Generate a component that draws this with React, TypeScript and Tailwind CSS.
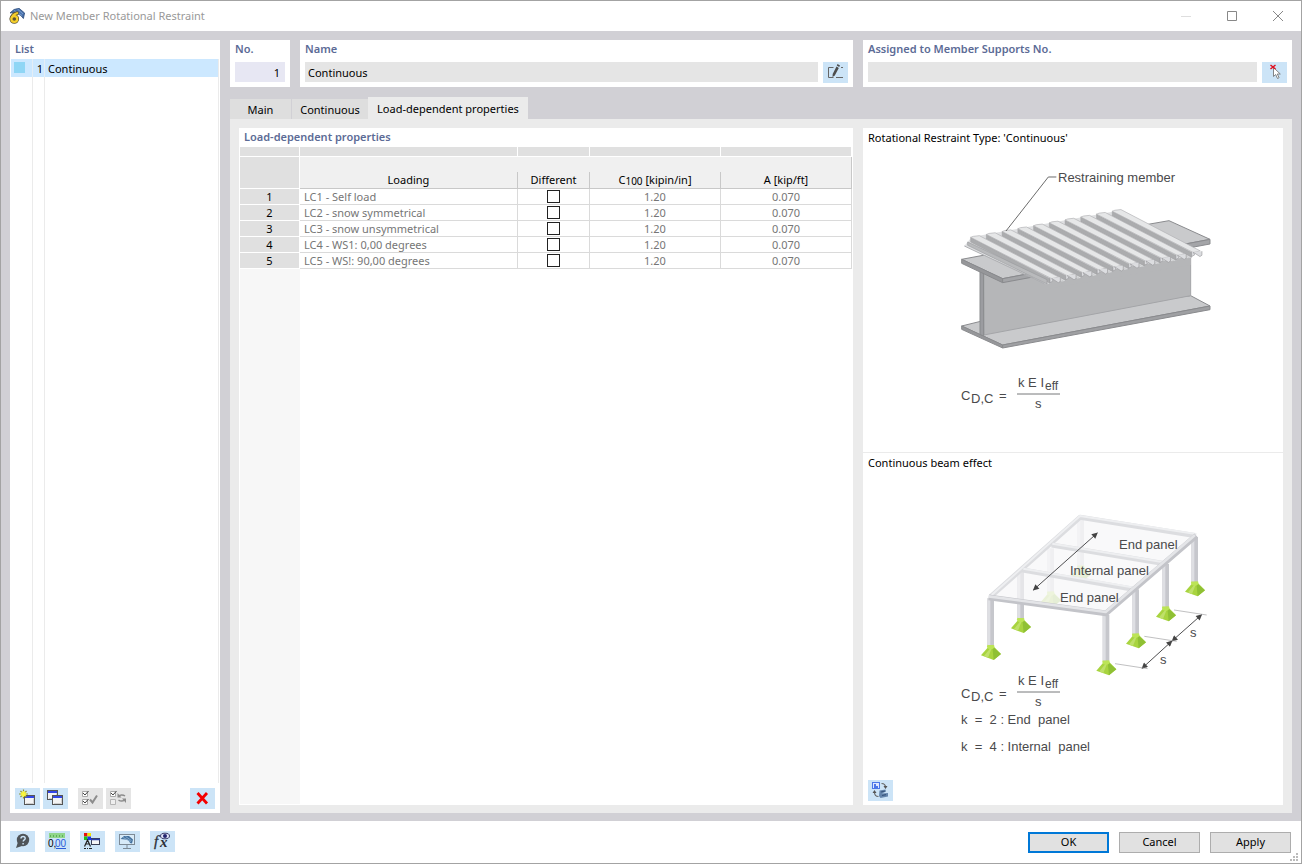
import type { ReactNode } from "react";

const rows = [
  { id: 1, loading: "LC1 - Self load", c100: "1.20", a: "0.070" },
  { id: 2, loading: "LC2 - snow symmetrical", c100: "1.20", a: "0.070" },
  { id: 3, loading: "LC3 - snow unsymmetrical", c100: "1.20", a: "0.070" },
  { id: 4, loading: "LC4 - WS1: 0,00 degrees", c100: "1.20", a: "0.070" },
  { id: 5, loading: "LC5 - WS!: 90,00 degrees", c100: "1.20", a: "0.070" },
];

function ToolButton({ label, disabled, children }: { label: string; disabled?: boolean; children: ReactNode }) {
  return (
    <button
      type="button"
      aria-label={label}
      disabled={disabled}
      className="flex h-[21px] w-[25px] shrink-0 items-center justify-center bg-[#cce4f7] disabled:bg-[#e5e5e5]"
    >
      <svg width="25" height="21" viewBox="0 0 25 21" aria-hidden="true">
        {children}
      </svg>
    </button>
  );
}

function WindowGlyph({ x, y }: { x: number; y: number }) {
  return (
    <g>
      <rect x={x + 0.5} y={y + 0.5} width="10" height="9" fill="#f4f4f4" stroke="#555" />
      <rect x={x + 1} y={y + 1} width="9" height="2" fill="#3346e6" />
      <path d={`M${x + 2} ${y + 8.5}h7.500v-5`} fill="none" stroke="#cfcfcf" />
    </g>
  );
}

function AppIcon() {
  return (
    <svg width="16" height="16" viewBox="0 0 16 16" aria-hidden="true">
      <path d="M1 5 5 1.500 10 .3 15.600 5l-1.200 5.500-2.600-3L6 4.200z" fill="#4a72ad" stroke="#2b4a78" strokeWidth=".8" />
      <path d="m5 2.500 8 5M8.500 1l5.500 5" stroke="#86a9d6" strokeWidth=".8" />
      <path
        d="M8 5.200C5.500 5.800 3 8 2.600 11"
        fill="none"
        stroke="#5d5535"
        strokeWidth="3.800"
        strokeLinecap="round"
      />
      <circle cx="5.300" cy="11" r="2.900" fill="none" stroke="#5d5535" strokeWidth="3.800" />
      <path d="M8 5.200C5.500 5.800 3 8 2.600 11" fill="none" stroke="#f5cf2b" strokeWidth="2.200" strokeLinecap="round" />
      <circle cx="5.300" cy="11" r="2.900" fill="#5d5535" stroke="#f5cf2b" strokeWidth="2.200" />
    </svg>
  );
}

const RUN = { x: 238, y: 124 };

function pts(list: number[][]) {
  return list.map((p) => p.join(",")).join(" ");
}

function Rib({ index }: { index: number }) {
  const x = 92 + 47.2 * index;
  const y = 247 - 8.7 * index;
  const ex = x + RUN.x;
  const ey = y + RUN.y;
  return (
    <g strokeLinejoin="round">
      <polygon points={pts([[x - 12, y + 17], [x + 2, y + 14], [ex + 2, ey + 14], [ex - 12, ey + 17]])} fill="#dcdddf" />
      <path d={`M${x - 6} ${y + 16}l${RUN.x} ${RUN.y}`} stroke="#c3c4c6" strokeWidth="2" />
      <polygon points={pts([[x, y], [x, y + 14], [ex, ey + 14], [ex, ey]])} fill="#abacae" stroke="#9fa0a2" strokeWidth="1.500" />
      <polygon
        points={pts([[x, y], [x + 8, y - 3], [x + 26, y - 5], [ex + 26, ey - 5], [ex + 5, ey]])}
        fill="#e6e7e8"
        stroke="#b0b1b3"
        strokeWidth="2"
      />
      <path d={`M${ex} ${ey - 2}v14l9 -5 -4 -8 20 13 6 -4v-12`} fill="#dcdde0" stroke="#9b9c9f" strokeWidth="2" />
    </g>
  );
}

function BeamDrawing() {
  const order = [9, 8, 7, 6, 5, 4, 3, 2, 1, 0];
  return (
    <svg
      viewBox="863 155 420 297"
      className="h-[297px] w-[420px]"
      fontFamily="'Liberation Sans', Arial, sans-serif"
      role="img"
      aria-label="Rotational restraint drawing"
    >
      <g transform="translate(940 155) scale(.333333)">
        <g stroke="#8a8b8e" strokeWidth="3" strokeLinejoin="round">
          <polygon points="65,513 130,497 752,422 810,453 188,570" fill="#c9cacc" />
          <polygon points="65,513 188,570 188,579 65,523" fill="#96979a" />
          <polygon points="188,570 810,453 810,464 188,579" fill="#9fa0a3" />
          <polygon points="130,350 752,270 752,422 132,540" fill="#b5b6b8" stroke="#a4a5a8" />
          <polygon points="120,345 131,350 131,543 120,538" fill="#9b9ca0" />
          <polygon points="65,313 630,207 687,197 810,253 188,371" fill="#c9cacc" />
          <polygon points="65,313 188,371 188,383 65,325" fill="#96979a" />
          <polygon points="188,371 810,253 810,267 188,383" fill="#a4a5a8" />
          <polygon points="330,362 752,284 752,330 330,400" fill="#b5b6b8" stroke="none" />
        </g>
        <polygon points="73,273 95,246 518,170 545,167 782,292 744,305 325,376 318,384" fill="#dfe0e2" />
        {order.map((i) => (
          <Rib key={i} index={i} />
        ))}
        <polygon points="83,261 83,271 321,387 321,374" fill="#b9babc" stroke="#9c9da0" strokeWidth="2" />
        <path d="M73 273l240 113" stroke="#aeafb2" strokeWidth="3" />
        <path d="M198 228 325 66h24" fill="none" stroke="#4d4d4d" strokeWidth="2.500" />
      </g>
      <g fill="#4a4a4c" fontSize="13">
        <text x="1058" y="182">Restraining member</text>
        <Formula y={0} />
      </g>
    </svg>
  );
}

function Formula({ y }: { y: number }) {
  return (
    <g transform={`translate(0 ${y})`}>
      <text x="961" y="400">C</text>
      <text x="971" y="403">D,C</text>
      <text x="999" y="400">=</text>
      <text x="1018" y="387">k E I</text>
      <text x="1045" y="390" fontSize="12">eff</text>
      <path d="M1017 394h43" stroke="#77787a" />
      <text x="1035" y="408">s</text>
    </g>
  );
}

function Post({ x, top, bottom, faded }: { x: number; top: number; bottom: number; faded?: boolean }) {
  return (
    <g opacity={faded ? 0.5 : 1}>
      <polygon
        points={pts([[x - 4, bottom - 2], [x + 7, bottom - 2], [x + 31, bottom + 23], [x + 9, bottom + 41], [x - 29, bottom + 27]])}
        fill="#a8d43f"
      />
      <polygon points={pts([[x + 5, bottom], [x + 31, bottom + 23], [x + 9, bottom + 41]])} fill="#8fc034" />
      <polygon points={pts([[x - 1, bottom + 6], [x + 3, bottom + 6], [x - 8, bottom + 34], [x - 20, bottom + 29]])} fill="#bfe06a" />
      <ellipse cx={x} cy={bottom} rx="11" ry="9" fill="#bce456" />
      <rect x={x - 10} y={top} width="20" height={bottom - top - 4} fill="#c6c7cc" />
      <rect x={x - 10} y={top} width="9" height={bottom - top - 4} fill="#dedfe3" />
    </g>
  );
}

function FrameDrawing() {
  return (
    <svg
      viewBox="863 480 420 300"
      className="h-[300px] w-[420px]"
      fontFamily="'Liberation Sans', Arial, sans-serif"
      role="img"
      aria-label="Continuous beam effect drawing"
    >
      <defs>
        <marker id="tip" viewBox="0 0 10 10" refX="9" refY="5" markerWidth="22" markerHeight="18" markerUnits="userSpaceOnUse" orient="auto-start-reverse">
          <path d="M0 0 10 5 0 10z" fill="#444" />
        </marker>
      </defs>
      <g transform="translate(970 500) scale(.333333)">
        <Post x={332} top={60} bottom={200} faded />
        <Post x={242} top={145} bottom={278} faded />
        <Post x={152} top={215} bottom={358} />
        <Post x={62} top={295} bottom={439} />
        <polygon points="62,290 330,52 678,107 410,340" fill="#f6f6f7" opacity=".65" />
        <g fill="none" strokeLinejoin="round">
          <path d="M62 290 330 52 678 107M245 135l345 57M158 210l345 60" stroke="#dcdde0" strokeWidth="15" />
          <path d="M64 286 330 48l348 54M247 131l343 57M160 206l343 59" stroke="#eeeff1" strokeWidth="6" />
        </g>
        <Post x={674} top={112} bottom={248} />
        <Post x={587} top={192} bottom={323} />
        <Post x={497} top={268} bottom={404} />
        <Post x={408} top={345} bottom={485} />
        <path d="M56 292 408 340 679 107" fill="none" stroke="#c3c4c9" strokeWidth="17" strokeLinejoin="round" />
        <path d="M56 289 407 336 675 105" fill="none" stroke="#e4e5e8" strokeWidth="8" strokeLinejoin="round" />
        <g stroke="#4d4d4f" strokeWidth="3" fill="none">
          <path d="M190 270 382 99" markerStart="url(#tip)" markerEnd="url(#tip)" />
          <path d="M516 505 606 423" markerStart="url(#tip)" markerEnd="url(#tip)" />
          <path d="M606 423 695 344" markerStart="url(#tip)" markerEnd="url(#tip)" />
          <path d="M435 491 533 506M523 409l97 15M612 330l98 15" stroke="#a0a0a2" strokeWidth="2" />
        </g>
      </g>
      <g fill="#4a4a4c" fontSize="13">
        <text x="1119" y="549">End panel</text>
        <text x="1070" y="575">Internal panel</text>
        <text x="1060" y="602">End panel</text>
        <text x="1190" y="637">s</text>
        <text x="1160" y="664">s</text>
        <Formula y={298} />
        <text x="961" y="724" xmlSpace="preserve">k  =  2 : End  panel</text>
        <text x="961" y="751" xmlSpace="preserve">k  =  4 : Internal  panel</text>
      </g>
    </svg>
  );
}

const stripCell = "h-[10px] border-r border-b border-white bg-[#e0e0e0] p-0";
const headCell = "h-8 border-b border-[#c8c8c8] bg-[#f0f0f0] p-0 align-bottom font-normal";
const bodyCell = "h-4 border-r border-b border-[#dadada] p-0 text-center leading-[15px] text-[#767676]";

function LoadTable() {
  return (
    <table className="w-full table-fixed border-separate border-spacing-0">
      <colgroup>
        <col className="w-[60px]" />
        <col />
        <col className="w-[72px]" />
        <col className="w-[131px]" />
        <col className="w-[131px]" />
      </colgroup>
      <thead>
        <tr>
          <td className={stripCell} />
          <td className={stripCell} />
          <td className={stripCell} />
          <td className={stripCell} />
          <td className={stripCell} />
        </tr>
        <tr>
          <td className="h-8 border-r border-b border-white bg-[#e0e0e0] p-0" />
          <th className={headCell}>
            <div className="h-4 border-r border-[#c8c8c8] leading-4">Loading</div>
          </th>
          <th className={headCell}>
            <div className="h-4 border-r border-[#c8c8c8] leading-4">Different</div>
          </th>
          <th className={headCell}>
            <div className="h-4 border-r border-[#c8c8c8] leading-4">
              C<span className="align-[-1px] text-[10px] leading-none">100</span> [kipin/in]
            </div>
          </th>
          <th className={`${headCell} border-r`}>
            <div className="h-4 leading-4">A [kip/ft]</div>
          </th>
        </tr>
      </thead>
      <tbody>
        {rows.map((r) => (
          <tr key={r.id}>
            <th scope="row" className="h-4 border-r border-b border-white bg-[#e0e0e0] p-0 leading-[15px] font-normal">
              {r.id}
            </th>
            <td className="h-4 border-r border-b border-[#dadada] px-1 py-0 leading-[15px] text-[#767676]">{r.loading}</td>
            <td className={bodyCell}>
              <input
                type="checkbox"
                aria-label={`Different for ${r.loading}`}
                className="mx-auto block size-[13px] appearance-none border border-[#222] bg-white checked:bg-[#222]"
              />
            </td>
            <td className={bodyCell}>{r.c100}</td>
            <td className={bodyCell}>{r.a}</td>
          </tr>
        ))}
      </tbody>
    </table>
  );
}

const panelTitle = "leading-[18px] font-semibold text-[#5c6b96]";

function Sidebar() {
  return (
    <aside className="flex w-[210px] shrink-0 flex-col bg-white">
      <h2 className={`h-[19px] pl-[5px] ${panelTitle}`}>List</h2>
      <div className="flex flex-1 flex-col px-px">
        <button type="button" className="flex h-[18px] w-full bg-[#cce8ff] text-left leading-[19px]">
          <span className="h-full w-[22px] border-r border-[#e4eef6] pt-[3px] pl-[3px]">
            <span className="block size-[11px] bg-[#8fd6f5]" />
          </span>
          <span className="h-full w-3 border-r border-[#e4eef6] pr-px text-right">1</span>
          <span className="h-full flex-1 border-r border-[#ebebeb] pl-[3px]">Continuous</span>
        </button>
        <div className="flex flex-1">
          <span className="w-[22px] border-r border-[#ebebeb]" />
          <span className="w-3 border-r border-[#ebebeb]" />
          <span className="flex-1 border-r border-[#ebebeb]" />
        </div>
      </div>
      <div className="flex gap-[3px] px-[5px] pt-[5px] pb-1">
        <ToolButton label="New">
          <WindowGlyph x={9} y={7} />
          <path d="M8.500 1.500v9M4 6h9M5.500 3l6 6M11.500 3l-6 6" stroke="#8c9132" strokeWidth="1.200" />
          <path d="M8.500 3v6M5.500 6h6M6.500 4l4 4M10.500 4l-4 4" stroke="#faf53c" strokeWidth="1.300" />
        </ToolButton>
        <ToolButton label="Duplicate">
          <WindowGlyph x={4} y={2} />
          <WindowGlyph x={9} y={7} />
        </ToolButton>
        <div className="ml-[7px] flex gap-[3px]">
          <ToolButton label="Select all" disabled>
            <path d="M4.500 3.500h5v5h-5zM4.500 11.500h5v5h-5z" fill="#fff" stroke="#a9a9a9" />
            <path d="m5 5 2 2 3.500-4M5 13l2 2 3.500-4" fill="none" stroke="#444" />
            <path d="m12 11.500 2.500 3 4.500-7" fill="none" stroke="#8c8c8c" strokeWidth="2" />
          </ToolButton>
          <ToolButton label="Invert selection" disabled>
            <path d="M4.500 3.500h5v5h-5z" fill="#fff" stroke="#a9a9a9" />
            <path d="M4.500 11.500h5v5h-5z" fill="#eee" stroke="#b5b5b5" />
            <path d="m5 5 2 2 3.500-4" fill="none" stroke="#444" />
            <path d="M12.500 8.500c1.500-2 4.500-2 6.500-.5M19 11.500c-1.500 2-4.500 2-6.500.5" fill="none" stroke="#8c8c8c" strokeWidth="1.500" />
            <path d="M11.500 5v4.500h4zM20 15v-4.500h-4z" fill="#8c8c8c" />
          </ToolButton>
        </div>
        <div className="ml-auto flex">
          <ToolButton label="Delete">
            <path d="M7.500 5 17 15.500M17 5 7.500 15.500" stroke="#f40000" strokeWidth="2.800" />
          </ToolButton>
        </div>
      </div>
    </aside>
  );
}

function FooterTools() {
  return (
    <div className="flex gap-[10px]">
      <ToolButton label="Help">
        <circle cx="13" cy="9" r="6.200" fill="#4f5458" />
        <path d="m8 11-2 6 6-2z" fill="#4f5458" />
        <path d="M11 7.500c0-2.600 4.200-2.600 4.200 0 0 1.400-2 1.400-2 3M13.100 12v1.500" fill="none" stroke="#cce4f7" strokeWidth="1.400" />
      </ToolButton>
      <ToolButton label="Units and decimal places">
        <path d="M4 2h16v5H4z" fill="#8fd68a" />
        <path d="M5.500 4v2M8.500 4v2M11.500 4v2M14.500 4v2M17.500 4v2" stroke="#5fae5a" />
        <text x="3" y="16" fontSize="10" fontFamily="'Liberation Sans', sans-serif">0,</text>
        <text x="10" y="16" fontSize="10" fill="#2a5bd7" fontFamily="'Liberation Sans', sans-serif">00</text>
        <path d="M11 17.500h10" stroke="#2a5bd7" />
      </ToolButton>
      <ToolButton label="Display settings">
        <path d="M4 2h3.500v3.500H4z" fill="#e81010" />
        <path d="M7.500 2H11v3.500H7.500z" fill="#f5e400" />
        <path d="M4 5.500h3.500V9H4z" fill="#19c319" />
        <path d="M7.500 5.500H11V9H7.500z" fill="#1c36e8" />
        <path d="m4.500 15.500 3-6.500 3 6.500M5.500 13h4M4 17.500h2m1 0h1m1 0h3" fill="none" stroke="#222" strokeWidth="1.200" />
        <rect x="11.500" y="7.500" width="8" height="6" fill="#f5f5f5" stroke="#3a3f55" />
        <path d="M11 8.500h9" stroke="#2a3fa8" strokeWidth="1.500" />
      </ToolButton>
      <ToolButton label="View settings">
        <rect x="4.500" y="3.500" width="15" height="10" fill="#d7eaf8" stroke="#7d8a96" />
        <path d="M12 14v3M8 17.500h8" stroke="#7d8a96" />
        <path d="m5.500 8 3.500-3h5l4 3.500-1 4-2-.5c-.5-2-2.500-3.500-5-3.500z" fill="#44729f" />
        <path d="m8 6.500 8 4M10.500 5.500l6 4" stroke="#9dbfdd" strokeWidth=".7" />
      </ToolButton>
      <ToolButton label="Formula editor">
        <text x="4" y="15" fontSize="15" fontStyle="italic" fontFamily="'Liberation Serif', serif" fill="#2b2f36" stroke="#2b2f36" strokeWidth=".3">
          f
        </text>
        <text x="10" y="16" fontSize="15" fontStyle="italic" fontWeight="bold" fontFamily="'Liberation Serif', serif" fill="#2b2f36">
          x
        </text>
        <ellipse cx="15" cy="5" rx="4.500" ry="2.800" fill="#dfe3f7" stroke="#3b3d6b" />
        <circle cx="15" cy="5" r="2" fill="#24266f" />
      </ToolButton>
    </div>
  );
}

export default function App() {
  return (
    <div className="flex min-h-screen flex-col border border-[#a3a3a3] bg-white font-['Noto_Sans',sans-serif] text-[11px] text-black">
      <header className="flex h-[30px] shrink-0 items-center pr-[18px] pl-2">
        <AppIcon />
        <h1 className="ml-[5px] flex-1 text-[#999]">New Member Rotational Restraint</h1>
        <div className="flex gap-9">
          <button type="button" aria-label="Minimize" className="size-[10px]">
            <svg width="10" height="10" viewBox="0 0 10 10"><path d="M0 5.500h10" stroke="#dedede" /></svg>
          </button>
          <button type="button" aria-label="Maximize" className="size-[10px]">
            <svg width="10" height="10" viewBox="0 0 10 10"><path d="M.5.5h9v9h-9z" fill="none" stroke="#888" /></svg>
          </button>
          <button type="button" aria-label="Close" className="size-[10px]">
            <svg width="10" height="10" viewBox="0 0 10 10"><path d="m0 0 10 10M10 0 0 10" stroke="#888" /></svg>
          </button>
        </div>
      </header>

      <div className="flex flex-1 gap-[10px] bg-[#d1d0d5] px-[9px] pt-[9px] pb-2">
        <Sidebar />
        <main className="flex min-w-0 flex-1 flex-col">
          <div className="flex h-[47px] gap-[10px]">
            <div className="w-[60px] bg-white px-[5px]">
              <label htmlFor="no" className={`block h-[22px] ${panelTitle}`}>No.</label>
              <input id="no" defaultValue="1" className="block h-5 w-full bg-[#e7e7f3] px-[5px] text-right outline-none" />
            </div>
            <div className="min-w-0 flex-1 bg-white px-[5px]">
              <label htmlFor="name" className={`block h-[22px] ${panelTitle}`}>Name</label>
              <div className="flex gap-[5px]">
                <input id="name" defaultValue="Continuous" className="h-5 min-w-0 flex-1 bg-[#e5e5e5] px-[3px] outline-none" />
                <ToolButton label="Edit name">
                  <path d="M10.500 5.500h-5v10h5M18 5.500h2M13 15.500h7" fill="none" stroke="#666" />
                  <path d="m14.500 2 2.500 1.500-.8 1.500-2.400-1.500zM13.500 4.500l2.300 1.400-4 7.600-2.300 1.500.2-3z" fill="#4d4d4d" />
                </ToolButton>
              </div>
            </div>
            <div className="w-[429px] shrink-0 bg-white px-[5px]">
              <label htmlFor="assigned" className={`block h-[22px] ${panelTitle}`}>Assigned to Member Supports No.</label>
              <div className="flex gap-[5px]">
                <input id="assigned" className="h-5 min-w-0 flex-1 bg-[#e5e5e5] px-[3px] outline-none" />
                <ToolButton label="Pick in graphics">
                  <path d="M11.500 5.500v9l2.200-2 1.800 4 1.600-.8-1.800-3.700h3z" fill="#fff" stroke="#777" strokeWidth=".9" />
                  <path d="m8.500 3 5 4M13.500 3l-5 4" stroke="#e01020" strokeWidth="1.500" />
                </ToolButton>
              </div>
            </div>
          </div>

          <div role="tablist" className="mt-[10px] flex h-[22px] items-end leading-[21px]">
            <button type="button" role="tab" className="h-5 w-[62px] border-r border-[#d1d0d5] bg-[#dedede]">Main</button>
            <button type="button" role="tab" className="h-5 w-[76px] bg-[#dedede]">Continuous</button>
            <button type="button" role="tab" aria-selected="true" className="h-[22px] w-[160px] bg-[#ebebeb] pt-px">
              Load-dependent properties
            </button>
          </div>

          <div className="flex flex-1 gap-[10px] bg-[#ebebeb] px-[9px] pt-[9px] pb-2">
            <section className="flex min-w-0 flex-1 flex-col bg-white px-px pb-px">
              <h2 className={`h-[19px] pl-1 ${panelTitle}`}>Load-dependent properties</h2>
              <LoadTable />
              <div className="w-[60px] flex-1 bg-[#f7f7f7]" />
            </section>
            <aside className="flex w-[420px] shrink-0 flex-col bg-white">
              <section className="flex h-[325px] flex-col border-b border-[#ebebeb]">
                <h3 className="h-[27px] pl-[5px] leading-5">Rotational Restraint Type: 'Continuous'</h3>
                <BeamDrawing />
              </section>
              <section className="flex flex-1 flex-col">
                <h3 className="h-[27px] pl-[5px] leading-5">Continuous beam effect</h3>
                <FrameDrawing />
                <div className="mt-auto pb-1 pl-[5px]">
                  <ToolButton label="Switch picture">
                    <rect x="4.500" y="2.500" width="7" height="6" fill="#dfe8ff" stroke="#4c78e8" />
                    <path d="M6 4h2v2h2v2H6z" fill="#4c78e8" />
                    <path d="M13.500 3.500c2.500 0 4 1 4 4M10.500 16.500c-3 0-4-1.500-4-4.500" fill="none" stroke="#666" strokeWidth="1.200" />
                    <path d="m15.500 6 2 3 2-3zM4.500 13l2-3 2 3z" fill="#555" />
                    <path d="m11.500 10.500 6-1 .5 2-4 2 6-.5v3.500l-7.500 1.500-1.500-2z" fill="#6384ab" />
                    <path d="m13 12 4-1M14 15.500l4-.8" stroke="#36547c" strokeWidth="1.200" />
                  </ToolButton>
                </div>
              </section>
            </aside>
          </div>
        </main>
      </div>

      <footer className="relative flex h-[42px] shrink-0 items-start justify-between pr-[10px] pl-[9px]">
        <div className="pt-[10px]">
          <FooterTools />
        </div>
        <div className="flex gap-[10px] pt-[11px]">
          <button type="button" className="h-[21px] w-[81px] border-2 border-[#0078d7] bg-[#e1e1e1]">OK</button>
          <button type="button" className="h-[21px] w-[81px] border border-[#adadad] bg-[#e1e1e1]">Cancel</button>
          <button type="button" className="h-[21px] w-[81px] border border-[#adadad] bg-[#e1e1e1]">Apply</button>
        </div>
        <svg className="absolute right-[3px] bottom-[2px]" width="8" height="8" viewBox="0 0 8 8" aria-hidden="true">
          <path d="M6 0h2v2H6zM3 3h2v2H3zM6 3h2v2H6zM0 6h2v2H0zM3 6h2v2H3zM6 6h2v2H6z" fill="#bbb" />
        </svg>
      </footer>
    </div>
  );
}
